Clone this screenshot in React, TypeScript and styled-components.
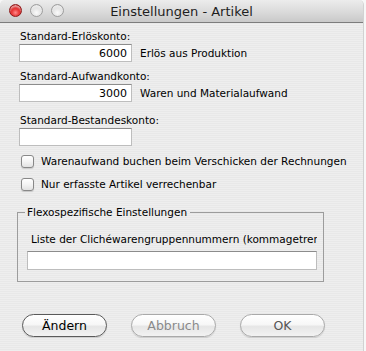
import styled, { createGlobalStyle } from "styled-components";

const GlobalStyle = createGlobalStyle`
  html, body {
    margin: 0;
    padding: 0;
    background: #f7f7f7;
  }
  body {
    font-family: "DejaVu Sans", "Liberation Sans", sans-serif;
    color: #000;
  }
`;

const App = () => {
  return (
    <>
      <GlobalStyle />
      <Window>
        <TitleBar>
          <Lights>
            <Light $color="red" />
            <Light />
            <Light />
          </Lights>
          <Title>Einstellungen - Artikel</Title>
          <span />
        </TitleBar>
        <Content>
          <Label $top={6}>Standard-Erlöskonto:</Label>
          <FieldRow>
            <TextInput defaultValue="6000" />
            <Hint>Erlös aus Produktion</Hint>
          </FieldRow>

          <Label $top={7}>Standard-Aufwandkonto:</Label>
          <FieldRow>
            <TextInput defaultValue="3000" />
            <Hint>Waren und Materialaufwand</Hint>
          </FieldRow>

          <Label $top={11}>Standard-Bestandeskonto:</Label>
          <FieldRow>
            <TextInput defaultValue="" />
          </FieldRow>

          <CheckRow $top={8}>
            <CheckBox />
            <span>Warenaufwand buchen beim Verschicken der Rechnungen</span>
          </CheckRow>
          <CheckRow $top={9}>
            <CheckBox />
            <span>Nur erfasste Artikel verrechenbar</span>
          </CheckRow>

          <Group>
            <Legend>Flexospezifische Einstellungen</Legend>
            <GroupLabel>
              Liste der Clichéwarengruppennummern (kommagetrennt)
            </GroupLabel>
            <WideInput />
          </Group>

          <Buttons>
            <Button $default>Ändern</Button>
            <Button $disabled>Abbruch</Button>
            <Button $muted>OK</Button>
          </Buttons>
        </Content>
      </Window>
    </>
  );
};

const Window = styled.div`
  width: 363px;
  height: 351px;
  border-right: 1px solid #d2d2d2;
  border-radius: 5px 5px 0 0;
  overflow: hidden;
  display: flex;
  flex-direction: column;
  background: repeating-linear-gradient(
    to bottom,
    #eeeeee 0px,
    #eeeeee 1px,
    #e8e8e8 1px,
    #e8e8e8 2px
  );
`;

const TitleBar = styled.div`
  height: 22px;
  flex-shrink: 0;
  display: grid;
  grid-template-columns: 1fr auto 1fr;
  align-items: center;
  background: linear-gradient(to bottom, #ececec 0%, #dcdcdc 50%, #c9c9c9 100%);
  border-bottom: 1px solid #7c7c7c;
`;

const Lights = styled.div`
  display: flex;
  gap: 8px;
  padding-left: 9px;
  margin-top: -1px;
`;

const Light = styled.div<{ $color?: string }>`
  width: 13px;
  height: 13px;
  border-radius: 50%;
  box-sizing: border-box;
  border: 1px solid ${(p) => (p.$color ? "#8e1a1a" : "#9d9d9d")};
  background: ${(p) =>
    p.$color
      ? "radial-gradient(circle at 50% 70%, #ff8a8a 0%, #e52a2a 45%, #a80000 100%)"
      : "radial-gradient(circle at 50% 70%, #fbfbfb 0%, #e2e2e2 50%, #bdbdbd 100%)"};
  box-shadow: inset 0 2px 2px rgba(255, 255, 255, 0.6);
`;

const Title = styled.div`
  font-size: 13px;
  color: #1e1e1e;
  white-space: nowrap;
`;

const Content = styled.div`
  display: flex;
  flex-direction: column;
  align-items: flex-start;
  padding-left: 18px;
  font-size: 10.5px;
`;

const Label = styled.div<{ $top: number }>`
  margin-top: ${(p) => p.$top}px;
  padding-left: 2px;
  line-height: 14px;
  height: 14px;
  margin-bottom: 1px;
`;

const FieldRow = styled.div`
  display: flex;
  align-items: center;
  gap: 8px;
  padding-left: 1px;
`;

const TextInput = styled.input`
  box-sizing: border-box;
  width: 113px;
  height: 18px;
  margin: 0;
  padding: 0 4px;
  border: 1px solid #bdbdbd;
  border-top-color: #8c8c8c;
  background: #fff;
  font-family: "DejaVu Sans", sans-serif;
  font-size: 11px;
  text-align: right;
  color: #000;
  outline: none;
`;

const Hint = styled.span`
  font-size: 10.5px;
`;

const CheckRow = styled.label<{ $top: number }>`
  display: flex;
  align-items: center;
  gap: 7px;
  margin-top: ${(p) => p.$top}px;
  padding-left: 3px;
  height: 14px;
  line-height: 14px;
`;

const CheckBox = styled.span`
  width: 13px;
  height: 13px;
  box-sizing: border-box;
  border: 1px solid #888;
  border-radius: 3px;
  background: linear-gradient(to bottom, #ffffff 0%, #f4f4f4 50%, #e2e2e2 100%);
  box-shadow: 0 1px 1px rgba(0, 0, 0, 0.15);
`;

const Group = styled.fieldset`
  margin: 14px 0 0 -1px;
  width: 307px;
  box-sizing: border-box;
  padding: 13px 6px 11px 9px;
  border: 1px solid #9c9c9c;
  border-radius: 0;
  min-width: 0;
`;

const Legend = styled.legend`
  margin-left: -2px;
  padding: 0 3px 0 2px;
  line-height: 14px;
  font-size: 10.5px;
`;

const GroupLabel = styled.div`
  padding-left: 4px;
  width: 286px;
  overflow: hidden;
  white-space: nowrap;
  line-height: 14px;
  height: 14px;
`;

const WideInput = styled(TextInput)`
  display: block;
  width: 290px;
  height: 19px;
  margin-top: 5px;
  text-align: left;
`;

const Buttons = styled.div`
  display: flex;
  gap: 24px;
  margin-top: 32px;
  padding-left: 4px;
`;

const Button = styled.button<{
  $default?: boolean;
  $disabled?: boolean;
  $muted?: boolean;
}>`
  width: 85px;
  height: 23px;
  margin: 0;
  padding: 0;
  border-radius: 12px;
  border: 1px solid ${(p) => (p.$default ? "#5a5a5a" : "#a9a9a9")};
  background: linear-gradient(
    to bottom,
    #ffffff 0%,
    #f7f7f7 45%,
    #e6e6e6 55%,
    #f2f2f2 100%
  );
  box-shadow: 0 1px 1px rgba(0, 0, 0, 0.12);
  font-family: "DejaVu Sans", sans-serif;
  font-size: 12.5px;
  color: ${(p) => (p.$disabled ? "#8a8a8a" : p.$muted ? "#555" : "#000")};
`;

export default App;
